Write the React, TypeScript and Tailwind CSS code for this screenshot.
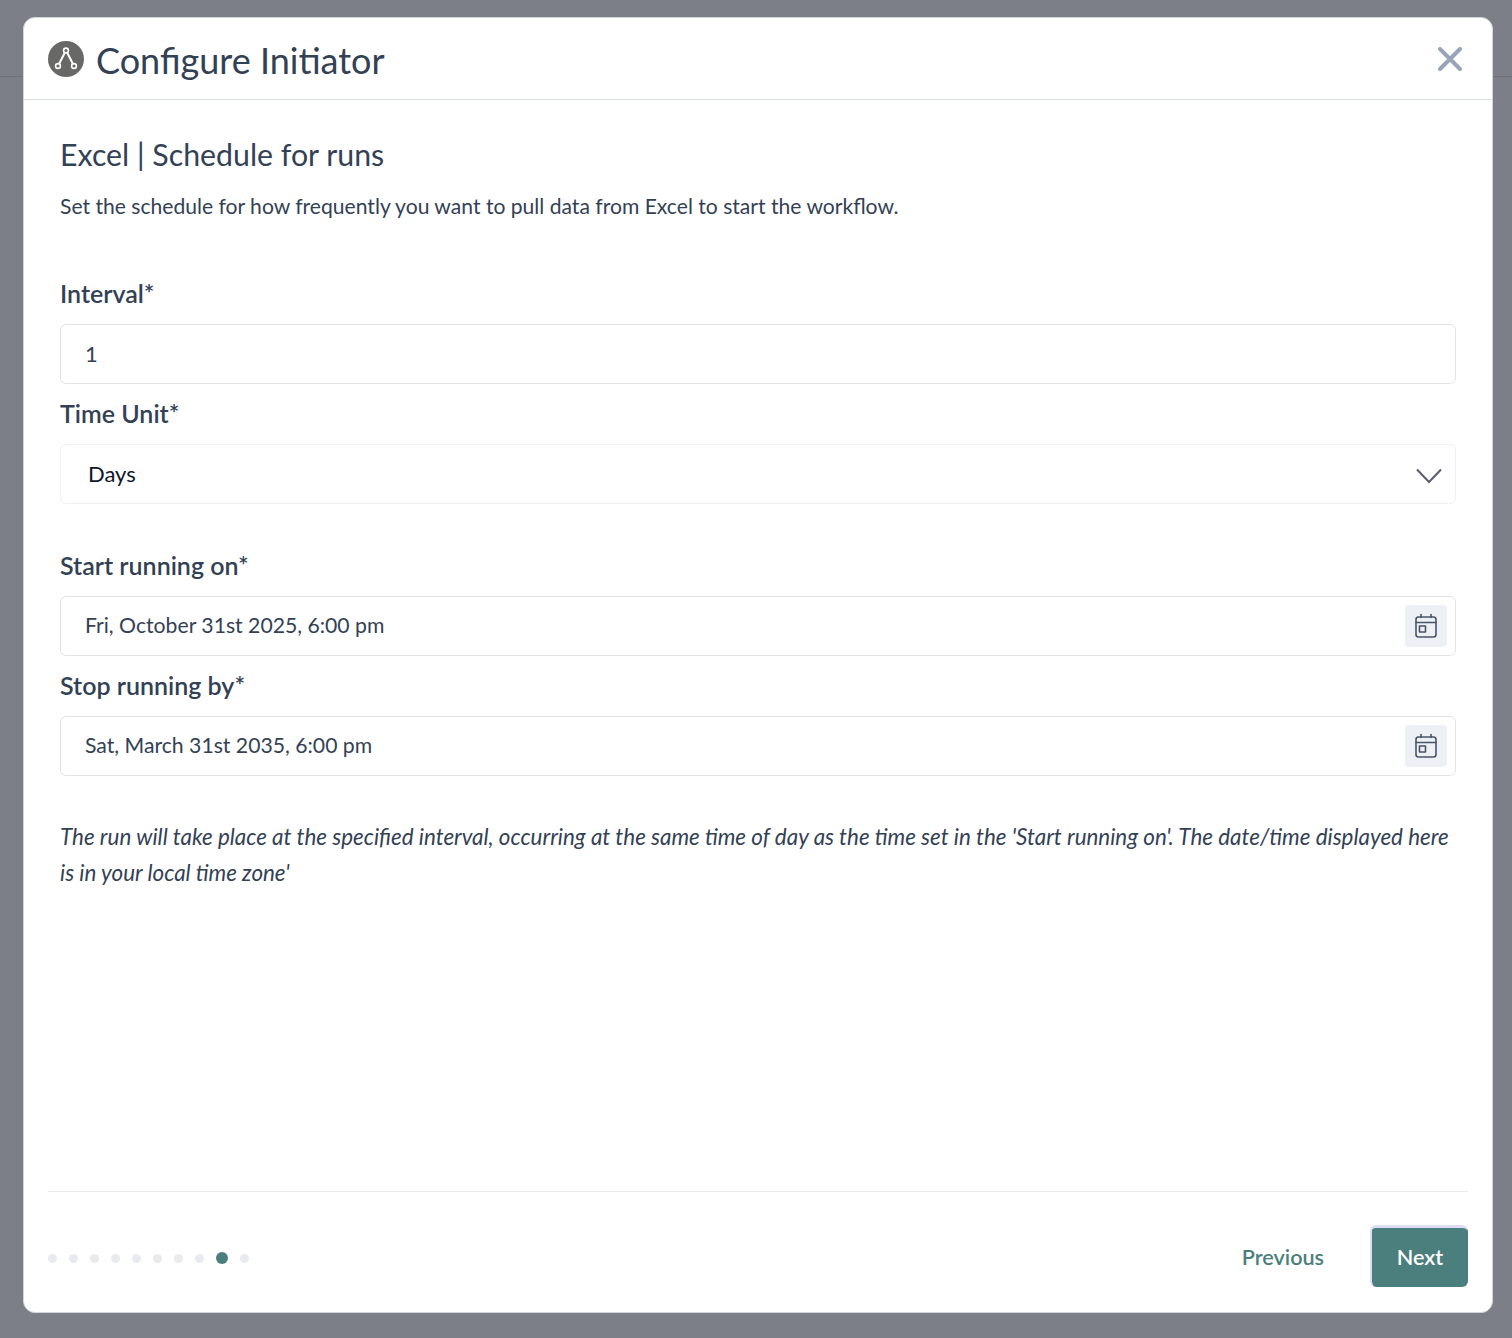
const font = "font-['Lato','Noto_Sans',sans-serif]"

function Label({ children }: { children: string }) {
    return <div className="h-[60px] pt-[13px] text-[25px] leading-8 font-semibold text-[#334155]">{children}</div>
}

function CalendarIcon() {
    return (
        <svg width="24" height="26" viewBox="0 0 24 26" fill="none" stroke="#475569" strokeWidth="1.6" strokeLinecap="round" strokeLinejoin="round">
            <rect x="2" y="4" width="20" height="20" rx="2.5" />
            <path d="M2 9.5h20M7 1.5v3M17 1.5v3" />
            <rect x="5.5" y="13" width="6" height="6" />
        </svg>
    )
}

function DateField({ value }: { value: string }) {
    return (
        <div className="h-[60px] border border-[#e2e3ea] rounded-md flex items-center justify-between pl-6 pr-2 text-[21.2px] text-[#334155]">
            <span>{value}</span>
            <div className="w-[42px] h-[42px] rounded bg-[#edf0f5] flex items-center justify-center">
                <CalendarIcon />
            </div>
        </div>
    )
}

export default function App() {
    return (
        <div className={`relative h-[1338px] bg-[#7c7f88] overflow-hidden ${font}`}>
            <div className="h-[77px] border-b border-[#6e7179]" />
            <div className="absolute left-[23px] top-[17px] w-[1470px] h-[1296px] bg-white rounded-xl border border-[#d4d5d8] flex flex-col">
                <div className="h-[82px] shrink-0 border-b border-[#d8e0e0] flex items-center justify-between pl-6 pr-[30px]">
                    <div className="flex items-center gap-3">
                        <svg width="36" height="36" viewBox="0 0 36 36" fill="none">
                            <circle cx="18" cy="18" r="18" fill="#686866" />
                            <path d="M16.8 11.8 11 23M19.2 11.8 25 23" stroke="#fff" strokeWidth="2" />
                            <circle cx="18" cy="9.5" r="2.4" stroke="#fff" strokeWidth="1.6" />
                            <circle cx="10" cy="25" r="2.4" stroke="#fff" strokeWidth="1.6" />
                            <circle cx="26" cy="25" r="2.4" stroke="#fff" strokeWidth="1.6" />
                        </svg>
                        <h1 className="text-[36px] leading-10 pt-[2px] text-[#334155]">Configure Initiator</h1>
                    </div>
                    <svg width="24" height="24" viewBox="0 0 24 24" fill="none" stroke="#98a4b9" strokeWidth="4" strokeLinecap="round">
                        <path d="M2 2 22 22M22 2 2 22" />
                    </svg>
                </div>
                <div className="flex-1 px-9 pt-[36px]">
                    <h2 className="text-[30.3px] leading-9 text-[#334155]">Excel | Schedule for runs</h2>
                    <p className="mt-[20px] text-[21.1px] leading-7 text-[#334155]">Set the schedule for how frequently you want to pull data from Excel to start the workflow.</p>
                    <div className="mt-[44px]">
                        <Label>Interval*</Label>
                        <div className="h-[60px] border border-[#e2e3ea] rounded-md flex items-center pl-[24px] pb-[2px] text-[22px] text-[#334155]">1</div>
                        <Label>Time Unit*</Label>
                        <div className="h-[60px] border border-[#eef0f3] rounded-md flex items-center justify-between pl-[27px] pr-[13px] text-[22px] text-[#0f172a]">
                            <span className="mb-[2px]">Days</span>
                            <svg className="mt-1" width="26" height="16" viewBox="0 0 26 16" fill="none" stroke="#5b5b73" strokeWidth="2">
                                <path d="M1 1.5 13 14 25 1.5" />
                            </svg>
                        </div>
                        <div className="h-[32px]" />
                        <Label>Start running on*</Label>
                        <DateField value="Fri, October 31st 2025, 6:00 pm" />
                        <Label>Stop running by*</Label>
                        <DateField value="Sat, March 31st 2035, 6:00 pm" />
                    </div>
                    <p className="mt-[43px] text-[22.4px] leading-9 italic text-[#334155]">The run will take place at the specified interval, occurring at the same time of day as the time set in the 'Start running on'. The date/time displayed here is in your local time zone'</p>
                </div>
                <div className="mx-6 border-t border-[#e9eaee] h-[121px] pt-[10px] shrink-0 flex items-center justify-between">
                    <div className="flex items-center mt-[2px]">
                        {Array.from({ length: 10 }).map((_, i) => (
                            i === 8
                                ? <span key={i} className="w-3 h-3 mr-3 rounded-full bg-[#4a7f7d]" />
                                : <span key={i} className="w-[9px] h-[9px] mr-3 rounded-full bg-[#e9eaef]" />
                        ))}
                    </div>
                    <div className="flex items-center gap-[46px]">
                        <span className="text-[21.6px] font-semibold text-[#4a7f7d]">Previous</span>
                        <button className="w-[98px] h-[62px] mb-[2px] rounded-md bg-[#4a7f7d] border-l-2 border-t-[3px] border-[#dcdcf5] text-[21.6px] font-semibold text-white">Next</button>
                    </div>
                </div>
            </div>
        </div>
    )
}
